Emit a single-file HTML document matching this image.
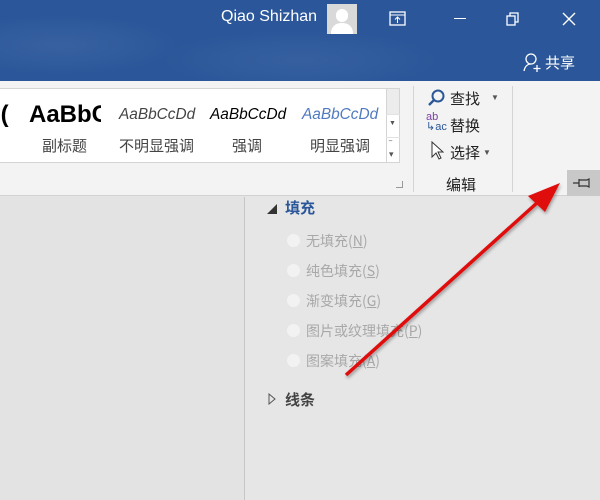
<!DOCTYPE html>
<html><head><meta charset="utf-8"><style>
*{margin:0;padding:0;box-sizing:border-box}
body{width:600px;height:500px;overflow:hidden;position:relative;background:#e5e5e5;font-family:"Liberation Sans","Noto Sans CJK SC",sans-serif}
.a{position:absolute}
.cj{font-family:"Noto Sans CJK SC",sans-serif}
</style></head><body>
<div class="a" style="left:0;top:0;width:600px;height:81px;background:#2b579a"></div>
<div class="a" style="left:0;top:0;width:600px;height:81px;background:radial-gradient(ellipse 120px 30px at 60px 45px,rgba(255,255,255,.06),transparent),radial-gradient(ellipse 140px 30px at 300px 60px,rgba(255,255,255,.05),transparent)"></div>
<div class="a" style="left:221px;top:8px;color:#fff;font-size:16px">Qiao Shizhan</div>
<div class="a" style="left:327px;top:4px;width:30px;height:30px;background:#d9d9d9;overflow:hidden">
 <div class="a" style="left:9px;top:5px;width:12px;height:13px;border-radius:6px;background:#fff"></div>
 <div class="a" style="left:4px;top:19px;width:22px;height:14px;border-radius:10px 10px 0 0;background:#fff"></div>
</div>
<svg class="a" style="left:388px;top:10px" width="20" height="18"><rect x="2" y="2" width="15" height="13" fill="none" stroke="#fff" stroke-width="1.3"/><line x1="2" y1="5" x2="17" y2="5" stroke="#fff"/><path d="M9.5 13V7M7 9.5l2.5-2.5 2.5 2.5" stroke="#fff" fill="none"/></svg>
<div class="a" style="left:454px;top:18px;width:12px;height:1.3px;background:#fff"></div>
<svg class="a" style="left:505px;top:11px" width="16" height="16"><rect x="2" y="5" width="8" height="9" fill="none" stroke="#fff" stroke-width="1.3"/><path d="M5 5V2h8v9h-3" fill="none" stroke="#fff" stroke-width="1.3"/></svg>
<svg class="a" style="left:561px;top:11px" width="16" height="16"><path d="M2 2L14 14M14 2L2 14" stroke="#fff" stroke-width="1.4"/></svg>
<svg class="a" style="left:522px;top:52px" width="22" height="22"><circle cx="9" cy="7" r="5" fill="none" stroke="#fff" stroke-width="1.3"/><path d="M2 19c1-5 4-7 7-7" fill="none" stroke="#fff" stroke-width="1.3"/><path d="M15 13v7M11.5 16.5h7" stroke="#fff" stroke-width="1.3"/></svg>
<div class="a cj" style="left:545px;top:52px;color:#fff;font-size:15px">共享</div>

<div class="a" style="left:0;top:81px;width:600px;height:115px;background:#f3f3f3;border-bottom:1px solid #d2d2d2"></div>
<div class="a" style="left:0;top:88px;width:400px;height:75px;background:#fff;border:1px solid #d4d4d4;border-left:none"></div>
<div class="a" style="left:386px;top:88px;width:14px;height:75px;border-left:1px solid #d4d4d4"></div>
<div class="a" style="left:386px;top:114px;width:14px;height:1px;background:#e2e2e2"></div>
<div class="a" style="left:386px;top:137px;width:14px;height:1px;background:#e2e2e2"></div>
<div class="a" style="left:387px;top:89px;width:12px;height:25px;background:#ececec"></div>
<div class="a" style="left:389px;top:120px;color:#555;font-size:7px">▼</div>
<div class="a" style="left:389px;top:141px;color:#555;font-size:9px;line-height:9px">‾<br>▾</div>

<div class="a" style="left:-14px;top:101px;font-size:24px;font-weight:bold;color:#000">b(</div>
<div class="a" style="left:29px;top:101px;width:72px;overflow:hidden;white-space:nowrap;font-size:24px;font-weight:bold;color:#000">AaBbCc</div>
<div class="a" style="left:119px;top:106px;font-size:15.4px;font-style:italic;color:#444">AaBbCcDd</div>
<div class="a" style="left:210px;top:106px;font-size:15.4px;font-style:italic;color:#000">AaBbCcDd</div>
<div class="a" style="left:302px;top:106px;font-size:15.4px;font-style:italic;color:#4f7ac0">AaBbCcDd</div>
<div class="a cj" style="left:42px;top:135px;font-size:15px;color:#444">副标题</div>
<div class="a cj" style="left:119px;top:135px;font-size:15px;color:#444">不明显强调</div>
<div class="a cj" style="left:232px;top:135px;font-size:15px;color:#444">强调</div>
<div class="a cj" style="left:310px;top:135px;font-size:15px;color:#444">明显强调</div>
<div class="a" style="left:396px;top:181px;width:7px;height:7px;border:1px solid #999;border-top:none;border-left:none"></div>
<div class="a" style="left:413px;top:86px;width:1px;height:106px;background:#d4d4d4"></div>
<div class="a" style="left:512px;top:86px;width:1px;height:106px;background:#d4d4d4"></div>
<svg class="a" style="left:427px;top:88px" width="20" height="20"><circle cx="11" cy="8" r="5.5" fill="none" stroke="#2b5797" stroke-width="2"/><path d="M7 12L2 17" stroke="#2b5797" stroke-width="2.4"/></svg>
<div class="a cj" style="left:450px;top:88px;font-size:15px;color:#222">查找</div>
<div class="a" style="left:491px;top:93px;font-size:8px;color:#555">▼</div>
<div class="a" style="left:426px;top:112px;font-size:11px;color:#7b3f9e;line-height:10px">ab<br><span style="color:#2b5797">↳ac</span></div>
<div class="a cj" style="left:450px;top:115px;font-size:15px;color:#222">替换</div>
<svg class="a" style="left:430px;top:141px" width="14" height="20"><path d="M2 1v15l4-4 3 6 2-1-3-6h5z" fill="#fff" stroke="#333"/></svg>
<div class="a cj" style="left:450px;top:142px;font-size:15px;color:#222">选择</div>
<div class="a" style="left:483px;top:148px;font-size:8px;color:#555">▼</div>
<div class="a cj" style="left:446px;top:174px;font-size:15px;color:#222">编辑</div>
<div class="a" style="left:567px;top:170px;width:33px;height:26px;background:#c8c8c8"></div>
<svg class="a" style="left:572px;top:177px" width="24" height="12"><path d="M1 6h6M7 2v8M7 3h8l2-1v8l-2-1H7" fill="none" stroke="#333" stroke-width="1.2"/></svg>

<div class="a" style="left:0;top:197px;width:244px;height:303px;background:#e3e3e3"></div>
<div class="a" style="left:244px;top:197px;width:1px;height:303px;background:#c6c6c6"></div>
<div class="a" style="left:245px;top:197px;width:355px;height:303px;background:#e6e6e6"></div>
<div class="a" style="left:267px;top:201px;font-size:10px;color:#333">◢</div>
<div class="a cj" style="left:285px;top:197px;font-size:15px;font-weight:bold;color:#2b579a">填充</div>
<div class="a" style="left:287px;top:234px;width:13px;height:13px;border-radius:50%;background:#f2f2f2"></div>
<div class="a" style="left:287px;top:264px;width:13px;height:13px;border-radius:50%;background:#f2f2f2"></div>
<div class="a" style="left:287px;top:294px;width:13px;height:13px;border-radius:50%;background:#f2f2f2"></div>
<div class="a" style="left:287px;top:324px;width:13px;height:13px;border-radius:50%;background:#f2f2f2"></div>
<div class="a" style="left:287px;top:354px;width:13px;height:13px;border-radius:50%;background:#f2f2f2"></div>
<div class="a cj" style="left:306px;top:231px;font-size:14px;color:#a8a8a8">无填充(<u>N</u>)</div>
<div class="a cj" style="left:306px;top:261px;font-size:14px;color:#a8a8a8">纯色填充(<u>S</u>)</div>
<div class="a cj" style="left:306px;top:291px;font-size:14px;color:#a8a8a8">渐变填充(<u>G</u>)</div>
<div class="a cj" style="left:306px;top:321px;font-size:14px;color:#a8a8a8">图片或纹理填充(<u>P</u>)</div>
<div class="a cj" style="left:306px;top:351px;font-size:14px;color:#a8a8a8">图案填充(<u>A</u>)</div>
<svg class="a" style="left:267px;top:393px" width="10" height="12"><path d="M2 1l6 5-6 5z" fill="none" stroke="#555"/></svg>
<div class="a cj" style="left:285px;top:389px;font-size:15px;font-weight:bold;color:#444">线条</div>

<svg class="a" style="left:0;top:0" width="600" height="500"><defs><filter id="s"><feDropShadow dx="1" dy="2" stdDeviation="1.5" flood-opacity=".35"/></filter></defs>
<g filter="url(#s)"><line x1="346" y1="375" x2="538" y2="202" stroke="#e01010" stroke-width="3.5"/><path d="M560 183L528 196L545 212Z" fill="#e01010"/></g></svg>
</body></html>
